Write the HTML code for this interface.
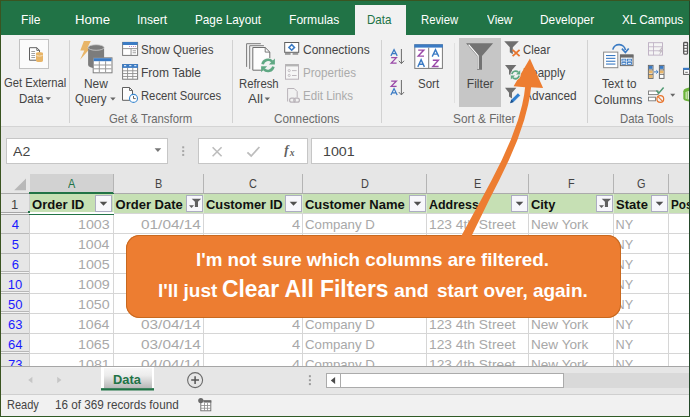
<!DOCTYPE html>
<html><head><meta charset="utf-8"><title>Excel - Clear All Filters</title>
<style>
html,body{margin:0;padding:0;}
body{width:690px;height:417px;overflow:hidden;position:relative;background:#e6e6e6;font-family:"Liberation Sans",sans-serif;}
.r{position:absolute;}
.t{position:absolute;white-space:nowrap;line-height:1;transform-origin:0 50%;font-family:"Liberation Sans",sans-serif;}
svg{position:absolute;left:0;top:0;}
</style></head><body>
<div class="r" style="left:0px;top:0px;width:690px;height:417px;background:#e6e6e6;"></div>
<div class="r" style="left:0px;top:0px;width:690px;height:35px;background:#217346;"></div>
<div class="r" style="left:0px;top:35px;width:690px;height:91px;background:#f1f1f1;"></div>
<div class="r" style="left:0px;top:126px;width:690px;height:1px;background:#d4d4d4;"></div>
<div class="r" style="left:355px;top:5px;width:51px;height:31px;background:#f1f1f1;"></div>
<span class="t" style="left:21.03px;top:14.02px;font-size:12.8px;color:#fff;transform:scaleX(0.9438);">File</span>
<span class="t" style="left:74.95px;top:14.02px;font-size:12.8px;color:#fff;transform:scaleX(1.0284);">Home</span>
<span class="t" style="left:136.91px;top:14.02px;font-size:12.8px;color:#fff;transform:scaleX(0.9420);">Insert</span>
<span class="t" style="left:195.06px;top:14.02px;font-size:12.8px;color:#fff;transform:scaleX(0.9183);">Page Layout</span>
<span class="t" style="left:289.03px;top:14.02px;font-size:12.8px;color:#fff;transform:scaleX(0.9441);">Formulas</span>
<span class="t" style="left:420.80px;top:14.02px;font-size:12.8px;color:#fff;transform:scaleX(0.8838);">Review</span>
<span class="t" style="left:486.84px;top:14.02px;font-size:12.8px;color:#fff;transform:scaleX(0.9215);">View</span>
<span class="t" style="left:540.05px;top:14.02px;font-size:12.8px;color:#fff;transform:scaleX(0.9274);">Developer</span>
<span class="t" style="left:622.21px;top:14.02px;font-size:12.8px;color:#fff;transform:scaleX(0.9214);">XL Campus</span>
<span class="t" style="left:367.27px;top:14.02px;font-size:12.8px;color:#217346;transform:scaleX(0.9044);">Data</span>
<div class="r" style="left:19px;top:39px;width:30px;height:30px;background:#fbfbfb;box-shadow:inset 0 0 0 1px #c2c2c2;"></div>
<span class="t" style="left:3.94px;top:77.02px;font-size:12.1px;color:#444;transform:scaleX(0.9267);">Get External</span>
<span class="t" style="left:18.57px;top:93.02px;font-size:12.1px;color:#444;transform:scaleX(0.9567);">Data</span>
<div class="r" style="left:69px;top:40px;width:1px;height:83px;background:#d2d2d2;"></div>
<span class="t" style="left:84.04px;top:78.02px;font-size:12.1px;color:#444;transform:scaleX(0.9874);">New</span>
<span class="t" style="left:75.48px;top:93.02px;font-size:12.1px;color:#444;transform:scaleX(0.9560);">Query</span>
<span class="t" style="left:140.98px;top:44.02px;font-size:12.1px;color:#444;transform:scaleX(0.9531);">Show Queries</span>
<span class="t" style="left:140.54px;top:67.02px;font-size:12.1px;color:#444;transform:scaleX(0.9948);">From Table</span>
<span class="t" style="left:140.80px;top:90.02px;font-size:12.1px;color:#444;transform:scaleX(0.9303);">Recent Sources</span>
<span class="t" style="left:108.93px;top:113.02px;font-size:12.1px;color:#6a6a6a;transform:scaleX(0.9380);">Get &amp; Transform</span>
<div class="r" style="left:232px;top:40px;width:1px;height:83px;background:#d2d2d2;"></div>
<span class="t" style="left:238.59px;top:78.02px;font-size:12.1px;color:#444;transform:scaleX(0.9361);">Refresh</span>
<span class="t" style="left:248.00px;top:93.02px;font-size:12.1px;color:#444;transform:scaleX(1.1072);">All</span>
<span class="t" style="left:303.20px;top:44.02px;font-size:12.1px;color:#444;transform:scaleX(0.9917);">Connections</span>
<span class="t" style="left:302.87px;top:67.02px;font-size:12.1px;color:#ababab;transform:scaleX(0.9612);">Properties</span>
<span class="t" style="left:302.77px;top:90.02px;font-size:12.1px;color:#ababab;transform:scaleX(0.9557);">Edit Links</span>
<span class="t" style="left:273.91px;top:113.02px;font-size:12.1px;color:#6a6a6a;transform:scaleX(0.9736);">Connections</span>
<div class="r" style="left:381px;top:40px;width:1px;height:83px;background:#d2d2d2;"></div>
<span class="t" style="left:417.98px;top:78.02px;font-size:12.1px;color:#444;transform:scaleX(0.9518);">Sort</span>
<div class="r" style="left:454px;top:43px;width:1px;height:60px;background:#e0e0e0;"></div>
<div class="r" style="left:459px;top:38px;width:42px;height:69px;background:#c6c6c6;"></div>
<span class="t" style="left:466.78px;top:78.02px;font-size:12.1px;color:#444;">Filter</span>
<span class="t" style="left:522.93px;top:44.02px;font-size:12.1px;color:#444;transform:scaleX(0.9420);">Clear</span>
<span class="t" style="left:522.58px;top:67.02px;font-size:12.1px;color:#444;transform:scaleX(0.9508);">Reapply</span>
<span class="t" style="left:523.50px;top:90.02px;font-size:12.1px;color:#444;transform:scaleX(0.9782);">Advanced</span>
<span class="t" style="left:452.97px;top:113.02px;font-size:12.1px;color:#6a6a6a;transform:scaleX(0.9776);">Sort &amp; Filter</span>
<div class="r" style="left:587px;top:40px;width:1px;height:83px;background:#d2d2d2;"></div>
<span class="t" style="left:601.52px;top:78.02px;font-size:12.1px;color:#444;transform:scaleX(0.9668);">Text to</span>
<span class="t" style="left:594.39px;top:94.02px;font-size:12.1px;color:#444;transform:scaleX(1.0116);">Columns</span>
<span class="t" style="left:620.09px;top:113.02px;font-size:12.1px;color:#6a6a6a;transform:scaleX(0.9363);">Data Tools</span>
<div class="r" style="left:6px;top:138px;width:162px;height:26px;background:#fff;box-shadow:inset 0 0 0 1px #c6c6c6;"></div>
<span class="t" style="left:13.00px;top:145.02px;font-size:13px;color:#444;transform:scaleX(1.0848);">A2</span>
<div class="r" style="left:198px;top:138px;width:110px;height:26px;background:#fff;box-shadow:inset 0 0 0 1px #c6c6c6;"></div>
<div class="r" style="left:311px;top:138px;width:379px;height:26px;background:#fff;box-shadow:inset 0 0 0 1px #c6c6c6;"></div>
<span class="t" style="left:322.93px;top:145.02px;font-size:13px;color:#444;transform:scaleX(1.0963);">1001</span>
<span class="t" style="left:284.20px;top:143.02px;font-size:13px;color:#606060;font-weight:bold;font-style:italic;font-family:'Liberation Serif',serif;">f</span>
<span class="t" style="left:289.74px;top:149.02px;font-size:9.5px;color:#606060;font-weight:bold;font-style:italic;font-family:'Liberation Serif',serif;">x</span>
<div class="r" style="left:0px;top:174px;width:690px;height:20px;background:#e6e6e6;"></div>
<div class="r" style="left:29px;top:194px;width:661px;height:172px;background:#fff;"></div>
<div class="r" style="left:30px;top:174px;width:83px;height:20px;background:#d2d2d2;"></div>
<div class="r" style="left:0px;top:193px;width:690px;height:1px;background:#ababab;"></div>
<div class="r" style="left:29px;top:192px;width:85px;height:2px;background:#217346;"></div>
<span class="t" style="left:67.62px;top:177.02px;font-size:13px;color:#217346;transform:scaleX(0.8400);">A</span>
<span class="t" style="left:154.58px;top:177.02px;font-size:13px;color:#444;transform:scaleX(0.8400);">B</span>
<span class="t" style="left:249.24px;top:177.02px;font-size:13px;color:#444;transform:scaleX(0.8400);">C</span>
<span class="t" style="left:360.50px;top:177.02px;font-size:13px;color:#444;transform:scaleX(0.8400);">D</span>
<span class="t" style="left:473.65px;top:177.02px;font-size:13px;color:#444;transform:scaleX(0.8400);">E</span>
<span class="t" style="left:567.58px;top:177.02px;font-size:13px;color:#444;transform:scaleX(0.8400);">F</span>
<span class="t" style="left:637.13px;top:177.02px;font-size:13px;color:#444;transform:scaleX(0.8400);">G</span>
<div class="r" style="left:113px;top:174px;width:1px;height:19px;background:#b4b4b4;"></div>
<div class="r" style="left:203px;top:174px;width:1px;height:19px;background:#b4b4b4;"></div>
<div class="r" style="left:302px;top:174px;width:1px;height:19px;background:#b4b4b4;"></div>
<div class="r" style="left:426px;top:174px;width:1px;height:19px;background:#b4b4b4;"></div>
<div class="r" style="left:528px;top:174px;width:1px;height:19px;background:#b4b4b4;"></div>
<div class="r" style="left:613px;top:174px;width:1px;height:19px;background:#b4b4b4;"></div>
<div class="r" style="left:668px;top:174px;width:1px;height:19px;background:#b4b4b4;"></div>
<div class="r" style="left:29px;top:194px;width:661px;height:19px;background:#c6e0b4;"></div>
<div class="r" style="left:29px;top:213px;width:661px;height:1px;background:#d6d6d6;"></div>
<div class="r" style="left:29px;top:233px;width:661px;height:1px;background:#d6d6d6;"></div>
<div class="r" style="left:29px;top:253px;width:661px;height:1px;background:#d6d6d6;"></div>
<div class="r" style="left:29px;top:273px;width:661px;height:1px;background:#d6d6d6;"></div>
<div class="r" style="left:29px;top:293px;width:661px;height:1px;background:#d6d6d6;"></div>
<div class="r" style="left:29px;top:313px;width:661px;height:1px;background:#d6d6d6;"></div>
<div class="r" style="left:29px;top:333px;width:661px;height:1px;background:#d6d6d6;"></div>
<div class="r" style="left:29px;top:353px;width:661px;height:1px;background:#d6d6d6;"></div>
<div class="r" style="left:113px;top:213px;width:1px;height:153px;background:#d6d6d6;"></div>
<div class="r" style="left:113px;top:194px;width:1px;height:19px;background:#dbe9d0;"></div>
<div class="r" style="left:203px;top:213px;width:1px;height:153px;background:#d6d6d6;"></div>
<div class="r" style="left:203px;top:194px;width:1px;height:19px;background:#dbe9d0;"></div>
<div class="r" style="left:302px;top:213px;width:1px;height:153px;background:#d6d6d6;"></div>
<div class="r" style="left:302px;top:194px;width:1px;height:19px;background:#dbe9d0;"></div>
<div class="r" style="left:426px;top:213px;width:1px;height:153px;background:#d6d6d6;"></div>
<div class="r" style="left:426px;top:194px;width:1px;height:19px;background:#dbe9d0;"></div>
<div class="r" style="left:528px;top:213px;width:1px;height:153px;background:#d6d6d6;"></div>
<div class="r" style="left:528px;top:194px;width:1px;height:19px;background:#dbe9d0;"></div>
<div class="r" style="left:613px;top:213px;width:1px;height:153px;background:#d6d6d6;"></div>
<div class="r" style="left:613px;top:194px;width:1px;height:19px;background:#dbe9d0;"></div>
<div class="r" style="left:668px;top:213px;width:1px;height:153px;background:#d6d6d6;"></div>
<div class="r" style="left:668px;top:194px;width:1px;height:19px;background:#dbe9d0;"></div>
<div class="r" style="left:0px;top:194px;width:29px;height:172px;background:#e6e6e6;"></div>
<div class="r" style="left:29px;top:194px;width:1px;height:172px;background:#cfcfcf;"></div>
<span class="t" style="left:10.93px;top:198.02px;font-size:13px;color:#444;">1</span>
<div class="r" style="left:0px;top:213px;width:29px;height:1px;background:#b8b8b8;"></div>
<span class="t" style="left:11.72px;top:218.02px;font-size:13px;color:#1a1aff;">4</span>
<div class="r" style="left:0px;top:233px;width:29px;height:1px;background:#b8b8b8;"></div>
<span class="t" style="left:11.69px;top:238.02px;font-size:13px;color:#1a1aff;">5</span>
<div class="r" style="left:0px;top:253px;width:29px;height:1px;background:#b8b8b8;"></div>
<span class="t" style="left:11.63px;top:258.02px;font-size:13px;color:#1a1aff;">6</span>
<div class="r" style="left:0px;top:273px;width:29px;height:1px;background:#b8b8b8;"></div>
<div class="r" style="left:0px;top:271px;width:29px;height:1px;background:#b8b8b8;"></div>
<div class="r" style="left:0px;top:272px;width:29px;height:1px;background:#f4f4f4;"></div>
<span class="t" style="left:7.83px;top:278.02px;font-size:13px;color:#1a1aff;">10</span>
<div class="r" style="left:0px;top:293px;width:29px;height:1px;background:#b8b8b8;"></div>
<div class="r" style="left:0px;top:291px;width:29px;height:1px;background:#b8b8b8;"></div>
<div class="r" style="left:0px;top:292px;width:29px;height:1px;background:#f4f4f4;"></div>
<span class="t" style="left:8.05px;top:298.02px;font-size:13px;color:#1a1aff;">50</span>
<div class="r" style="left:0px;top:313px;width:29px;height:1px;background:#b8b8b8;"></div>
<div class="r" style="left:0px;top:311px;width:29px;height:1px;background:#b8b8b8;"></div>
<div class="r" style="left:0px;top:312px;width:29px;height:1px;background:#f4f4f4;"></div>
<span class="t" style="left:8.02px;top:318.02px;font-size:13px;color:#1a1aff;">63</span>
<div class="r" style="left:0px;top:333px;width:29px;height:1px;background:#b8b8b8;"></div>
<span class="t" style="left:7.92px;top:338.02px;font-size:13px;color:#1a1aff;">64</span>
<div class="r" style="left:0px;top:353px;width:29px;height:1px;background:#b8b8b8;"></div>
<div class="r" style="left:0px;top:351px;width:29px;height:1px;background:#b8b8b8;"></div>
<div class="r" style="left:0px;top:352px;width:29px;height:1px;background:#f4f4f4;"></div>
<span class="t" style="left:8.02px;top:358.02px;font-size:13px;color:#1a1aff;">73</span>
<div class="r" style="left:0px;top:212px;width:29px;height:1px;background:#a6a6a6;"></div>
<div class="r" style="left:0px;top:213px;width:29px;height:1px;background:#f4f4f4;"></div>
<div class="r" style="left:0px;top:214px;width:29px;height:1px;background:#a6a6a6;"></div>
<div class="r" style="left:29px;top:212px;width:85px;height:1.5px;background:#fff;"></div>
<div class="r" style="left:29px;top:213.5px;width:85px;height:1.5px;background:#217346;"></div>
<div class="r" style="left:28px;top:211px;width:2px;height:2px;background:#217346;"></div>
<span class="t" style="left:31.98px;top:198.02px;font-size:13px;color:#111;font-weight:bold;transform:scaleX(1.0057);">Order ID</span>
<span class="t" style="left:115.58px;top:198.02px;font-size:13px;color:#111;font-weight:bold;">Order Date</span>
<span class="t" style="left:205.99px;top:198.02px;font-size:13px;color:#111;font-weight:bold;transform:scaleX(0.9902);">Customer ID</span>
<span class="t" style="left:304.98px;top:198.02px;font-size:13px;color:#111;font-weight:bold;">Customer Name</span>
<span class="t" style="left:429.19px;top:198.02px;font-size:13px;color:#111;font-weight:bold;transform:scaleX(0.9579);">Address</span>
<span class="t" style="left:531.24px;top:198.02px;font-size:13px;color:#111;font-weight:bold;transform:scaleX(0.9902);">City</span>
<span class="t" style="left:616.11px;top:198.02px;font-size:13px;color:#111;font-weight:bold;">State</span>
<span class="t" style="left:670.54px;top:198.02px;font-size:13px;color:#111;font-weight:bold;transform:scaleX(0.8982);">Pos</span>
<div class="r" style="left:95px;top:195px;width:17px;height:17px;background:#f7f7fb;box-shadow:inset 0 0 0 1px #adadc2;"></div>
<div class="r" style="left:186px;top:195px;width:17px;height:17px;background:#f7f7fb;box-shadow:inset 0 0 0 1px #adadc2;"></div>
<div class="r" style="left:285px;top:195px;width:17px;height:17px;background:#f7f7fb;box-shadow:inset 0 0 0 1px #adadc2;"></div>
<div class="r" style="left:409px;top:195px;width:17px;height:17px;background:#f7f7fb;box-shadow:inset 0 0 0 1px #adadc2;"></div>
<div class="r" style="left:511px;top:195px;width:17px;height:17px;background:#f7f7fb;box-shadow:inset 0 0 0 1px #adadc2;"></div>
<div class="r" style="left:596px;top:195px;width:17px;height:17px;background:#f7f7fb;box-shadow:inset 0 0 0 1px #adadc2;"></div>
<div class="r" style="left:651px;top:195px;width:17px;height:17px;background:#f7f7fb;box-shadow:inset 0 0 0 1px #adadc2;"></div>
<span class="t" style="left:78.03px;top:219.02px;font-size:12.7px;color:#a8a8a8;transform:scaleX(1.1233);">1003</span>
<span class="t" style="left:140.78px;top:219.02px;font-size:12.7px;color:#a8a8a8;transform:scaleX(1.2125);">01/04/14</span>
<span class="t" style="left:292.46px;top:219.02px;font-size:12.7px;color:#a8a8a8;transform:scaleX(1.1579);">4</span>
<span class="t" style="left:304.84px;top:219.02px;font-size:12.7px;color:#a8a8a8;transform:scaleX(1.0418);">Company D</span>
<span class="t" style="left:429.06px;top:219.02px;font-size:12.7px;color:#a8a8a8;transform:scaleX(1.0871);">123 4th Street</span>
<span class="t" style="left:530.66px;top:219.02px;font-size:12.7px;color:#a8a8a8;transform:scaleX(1.0704);">New York</span>
<span class="t" style="left:615.49px;top:219.02px;font-size:12.7px;color:#a8a8a8;">NY</span>
<span class="t" style="left:78.04px;top:239.02px;font-size:12.7px;color:#a8a8a8;transform:scaleX(1.1153);">1004</span>
<span class="t" style="left:140.78px;top:239.02px;font-size:12.7px;color:#a8a8a8;transform:scaleX(1.2125);">01/04/14</span>
<span class="t" style="left:292.46px;top:239.02px;font-size:12.7px;color:#a8a8a8;transform:scaleX(1.1579);">4</span>
<span class="t" style="left:304.84px;top:239.02px;font-size:12.7px;color:#a8a8a8;transform:scaleX(1.0418);">Company D</span>
<span class="t" style="left:429.06px;top:239.02px;font-size:12.7px;color:#a8a8a8;transform:scaleX(1.0871);">123 4th Street</span>
<span class="t" style="left:530.66px;top:239.02px;font-size:12.7px;color:#a8a8a8;transform:scaleX(1.0704);">New York</span>
<span class="t" style="left:615.49px;top:239.02px;font-size:12.7px;color:#a8a8a8;">NY</span>
<span class="t" style="left:78.03px;top:259.02px;font-size:12.7px;color:#a8a8a8;transform:scaleX(1.1233);">1005</span>
<span class="t" style="left:140.78px;top:259.02px;font-size:12.7px;color:#a8a8a8;transform:scaleX(1.2125);">01/04/14</span>
<span class="t" style="left:292.46px;top:259.02px;font-size:12.7px;color:#a8a8a8;transform:scaleX(1.1579);">4</span>
<span class="t" style="left:304.84px;top:259.02px;font-size:12.7px;color:#a8a8a8;transform:scaleX(1.0418);">Company D</span>
<span class="t" style="left:429.06px;top:259.02px;font-size:12.7px;color:#a8a8a8;transform:scaleX(1.0871);">123 4th Street</span>
<span class="t" style="left:530.66px;top:259.02px;font-size:12.7px;color:#a8a8a8;transform:scaleX(1.0704);">New York</span>
<span class="t" style="left:615.49px;top:259.02px;font-size:12.7px;color:#a8a8a8;">NY</span>
<span class="t" style="left:78.03px;top:279.02px;font-size:12.7px;color:#a8a8a8;transform:scaleX(1.1259);">1009</span>
<span class="t" style="left:140.78px;top:279.02px;font-size:12.7px;color:#a8a8a8;transform:scaleX(1.2125);">01/04/14</span>
<span class="t" style="left:292.46px;top:279.02px;font-size:12.7px;color:#a8a8a8;transform:scaleX(1.1579);">4</span>
<span class="t" style="left:304.84px;top:279.02px;font-size:12.7px;color:#a8a8a8;transform:scaleX(1.0418);">Company D</span>
<span class="t" style="left:429.06px;top:279.02px;font-size:12.7px;color:#a8a8a8;transform:scaleX(1.0871);">123 4th Street</span>
<span class="t" style="left:530.66px;top:279.02px;font-size:12.7px;color:#a8a8a8;transform:scaleX(1.0704);">New York</span>
<span class="t" style="left:615.49px;top:279.02px;font-size:12.7px;color:#a8a8a8;">NY</span>
<span class="t" style="left:78.03px;top:299.02px;font-size:12.7px;color:#a8a8a8;transform:scaleX(1.1206);">1050</span>
<span class="t" style="left:140.78px;top:299.02px;font-size:12.7px;color:#a8a8a8;transform:scaleX(1.2125);">01/04/14</span>
<span class="t" style="left:292.46px;top:299.02px;font-size:12.7px;color:#a8a8a8;transform:scaleX(1.1579);">4</span>
<span class="t" style="left:304.84px;top:299.02px;font-size:12.7px;color:#a8a8a8;transform:scaleX(1.0418);">Company D</span>
<span class="t" style="left:429.06px;top:299.02px;font-size:12.7px;color:#a8a8a8;transform:scaleX(1.0871);">123 4th Street</span>
<span class="t" style="left:530.66px;top:299.02px;font-size:12.7px;color:#a8a8a8;transform:scaleX(1.0704);">New York</span>
<span class="t" style="left:615.49px;top:299.02px;font-size:12.7px;color:#a8a8a8;">NY</span>
<span class="t" style="left:78.04px;top:319.02px;font-size:12.7px;color:#a8a8a8;transform:scaleX(1.1153);">1064</span>
<span class="t" style="left:140.78px;top:319.02px;font-size:12.7px;color:#a8a8a8;transform:scaleX(1.2125);">03/04/14</span>
<span class="t" style="left:292.46px;top:319.02px;font-size:12.7px;color:#a8a8a8;transform:scaleX(1.1579);">4</span>
<span class="t" style="left:304.84px;top:319.02px;font-size:12.7px;color:#a8a8a8;transform:scaleX(1.0418);">Company D</span>
<span class="t" style="left:429.06px;top:319.02px;font-size:12.7px;color:#a8a8a8;transform:scaleX(1.0871);">123 4th Street</span>
<span class="t" style="left:530.66px;top:319.02px;font-size:12.7px;color:#a8a8a8;transform:scaleX(1.0704);">New York</span>
<span class="t" style="left:615.49px;top:319.02px;font-size:12.7px;color:#a8a8a8;">NY</span>
<span class="t" style="left:78.03px;top:339.02px;font-size:12.7px;color:#a8a8a8;transform:scaleX(1.1233);">1065</span>
<span class="t" style="left:140.78px;top:339.02px;font-size:12.7px;color:#a8a8a8;transform:scaleX(1.2125);">03/04/14</span>
<span class="t" style="left:292.46px;top:339.02px;font-size:12.7px;color:#a8a8a8;transform:scaleX(1.1579);">4</span>
<span class="t" style="left:304.84px;top:339.02px;font-size:12.7px;color:#a8a8a8;transform:scaleX(1.0418);">Company D</span>
<span class="t" style="left:429.06px;top:339.02px;font-size:12.7px;color:#a8a8a8;transform:scaleX(1.0871);">123 4th Street</span>
<span class="t" style="left:530.66px;top:339.02px;font-size:12.7px;color:#a8a8a8;transform:scaleX(1.0704);">New York</span>
<span class="t" style="left:615.49px;top:339.02px;font-size:12.7px;color:#a8a8a8;">NY</span>
<span class="t" style="left:78.03px;top:359.02px;font-size:12.7px;color:#a8a8a8;transform:scaleX(1.1259);">1081</span>
<span class="t" style="left:140.78px;top:359.02px;font-size:12.7px;color:#a8a8a8;transform:scaleX(1.2125);">04/04/14</span>
<span class="t" style="left:292.46px;top:359.02px;font-size:12.7px;color:#a8a8a8;transform:scaleX(1.1579);">4</span>
<span class="t" style="left:304.84px;top:359.02px;font-size:12.7px;color:#a8a8a8;transform:scaleX(1.0418);">Company D</span>
<span class="t" style="left:429.06px;top:359.02px;font-size:12.7px;color:#a8a8a8;transform:scaleX(1.0871);">123 4th Street</span>
<span class="t" style="left:530.66px;top:359.02px;font-size:12.7px;color:#a8a8a8;transform:scaleX(1.0704);">New York</span>
<span class="t" style="left:615.49px;top:359.02px;font-size:12.7px;color:#a8a8a8;">NY</span>
<div class="r" style="left:0px;top:366px;width:690px;height:28px;background:#e6e6e6;"></div>
<div class="r" style="left:0px;top:366px;width:690px;height:1px;background:#a6a6a6;"></div>
<div class="r" style="left:0px;top:394px;width:690px;height:23px;background:#f1f1f1;"></div>
<div class="r" style="left:0px;top:394px;width:690px;height:1px;background:#cfcfcf;"></div>
<div class="r" style="left:101px;top:367px;width:53px;height:22px;background:#fff;"></div>
<div class="r" style="left:104px;top:368px;width:47.5px;height:20.5px;background:#ddd;background:linear-gradient(#f6f6f6 0%,#ececec 35%,#b4b4b4 100%);"></div>
<div class="r" style="left:101px;top:388px;width:53px;height:1px;background:#3f8360;"></div>
<div class="r" style="left:101px;top:389px;width:53px;height:1px;background:#217346;"></div>
<div class="r" style="left:101px;top:390px;width:53px;height:1px;background:#84ad96;"></div>
<span class="t" style="left:113.27px;top:374.02px;font-size:12.9px;color:#217346;font-weight:bold;transform:scaleX(0.9956);">Data</span>
<div class="r" style="left:326px;top:373px;width:15px;height:14.5px;background:#fff;box-shadow:inset 0 0 0 1px #ababab;"></div>
<div class="r" style="left:341px;top:373px;width:349px;height:14.5px;background:#d9d9d9;"></div>
<div class="r" style="left:340px;top:373px;width:224px;height:14.5px;background:#fff;box-shadow:inset 0 0 0 1px #ababab;"></div>
<span class="t" style="left:7.37px;top:399.02px;font-size:12.1px;color:#444;transform:scaleX(0.9117);">Ready</span>
<span class="t" style="left:54.62px;top:399.02px;font-size:12.1px;color:#444;transform:scaleX(0.9680);">16 of 369 records found</span>
<div class="r" style="left:126px;top:235px;width:494.5px;height:83px;background:#ed7d31;border-radius:13.5px;box-shadow:inset 0 0 0 1px #c8691f;"></div>
<span class="t" style="left:195.98px;top:251.02px;font-size:18.2px;color:#fff;font-weight:bold;transform:scaleX(1.0321);">I'm not sure which columns are filtered.</span>
<span class="t" style="left:158.37px;top:282.02px;font-size:18.2px;color:#fff;font-weight:bold;transform:scaleX(1.0431);">I'll just</span>
<span class="t" style="left:221.99px;top:278.02px;font-size:23.4px;color:#fff;font-weight:bold;transform:scaleX(0.9754);">Clear All Filters</span>
<span class="t" style="left:393.91px;top:282.02px;font-size:18.2px;color:#fff;font-weight:bold;transform:scaleX(1.0727);">and</span>
<span class="t" style="left:437.14px;top:282.02px;font-size:18.2px;color:#fff;font-weight:bold;transform:scaleX(1.0429);">start over, again.</span>
<div class="r" style="left:0px;top:0px;width:1.2px;height:417px;background:#3a5421;"></div>
<div class="r" style="left:688.8px;top:0px;width:1.2px;height:417px;background:#23482a;"></div>
<div class="r" style="left:0px;top:415.6px;width:690px;height:1.4px;background:#2f5a26;"></div>
<div class="r" style="left:0px;top:0px;width:690px;height:1px;background:#3a5421;"></div>
<svg width="690" height="417" viewBox="0 0 690 417">
<path d="M99.7,201.8h7.6l-3.8,4z" fill="#505050"/>
<path d="M191.7,198.8h9.5l-3.2,3v5.2h-3.1v-5.2z" fill="#606060"/>
<path d="M189,205.2h5l-2.5,2.9z" fill="#606060"/>
<path d="M289.7,201.8h7.6l-3.8,4z" fill="#505050"/>
<path d="M413.7,201.8h7.6l-3.8,4z" fill="#505050"/>
<path d="M515.7,201.8h7.6l-3.8,4z" fill="#505050"/>
<path d="M601.7,198.8h9.5l-3.2,3v5.2h-3.1v-5.2z" fill="#606060"/>
<path d="M599,205.2h5l-2.5,2.9z" fill="#606060"/>
<path d="M655.7,201.8h7.6l-3.8,4z" fill="#505050"/>
<path d="M529.9,58.6 L543.1,88 L531.1,87.3 L530.1,95 L528.1,105 L524.2,120 L517.4,140 L508.9,160 L499.3,180 L489.1,200 L481.8,215 L475.4,228 L471.1,237 L460.8,237 L465.6,228 L472.7,215 L481.0,200 L491.7,180 L501.8,160 L510.7,140 L518.0,120 L522.1,105 L524.1,95 L525.1,87.3 L513.6,86.2 Z" fill="#ed7d31"/>
<path d="M29.5,47.7h7.3l2.7,2.7v9.8h-10z" fill="#fff" stroke="#5f5f5f" stroke-width="1"/>
<path d="M36.8,47.7v2.7h2.7" fill="none" stroke="#5f5f5f" stroke-width="0.9"/>
<rect x="31.3" y="51.0" width="3.8" height="0.8" fill="#8a8a8a"/>
<rect x="31.3" y="53.1" width="3.8" height="0.8" fill="#8a8a8a"/>
<rect x="31.3" y="55.1" width="3.8" height="0.8" fill="#8a8a8a"/>
<rect x="31.3" y="57.2" width="3.8" height="0.8" fill="#8a8a8a"/>
<path d="M36,53.6 v6.8 a3.5,1.5 0 0 0 7,0 v-6.8 z" fill="#e8b568"/>
<ellipse cx="39.5" cy="53.6" rx="3.5" ry="1.5" fill="#e8b568"/>
<path d="M36.3,54.9 a3.2,1.2 0 0 0 6.4,0" fill="none" stroke="#fbeed8" stroke-width="0.8"/>
<path d="M45.5,97.2h5.4l-2.7,3z" fill="#666"/>
<path d="M83.9,41 L90.8,41.1 L87.6,47.4 L90.4,48 L80.1,59.8 L84.3,50.4 L80.3,50.4 Z" fill="#e8b568"/>
<path d="M88.1,47.5 v17.5 a8,3.2 0 0 0 16,0 v-17.5 z" fill="#7c7c7c"/>
<ellipse cx="96.1" cy="47.5" rx="8" ry="2.8" fill="#7c7c7c" stroke="#cfcfcf" stroke-width="0.8"/>
<rect x="93.2" y="57.8" width="18.8" height="15" fill="#fff" stroke="#7f7f7f" stroke-width="1"/>
<rect x="93.7" y="58.2" width="17.8" height="3" fill="#3b7bc4"/>
<rect x="98.8" y="61.2" width="1" height="11.2" fill="#9a9a9a"/>
<rect x="105.1" y="61.2" width="1" height="11.2" fill="#9a9a9a"/>
<rect x="93.7" y="64.5" width="17.8" height="1" fill="#9a9a9a"/>
<rect x="93.7" y="68.3" width="17.8" height="1" fill="#9a9a9a"/>
<path d="M110.2,97.6h5.4l-2.7,3z" fill="#666"/>
<rect x="122.6" y="42.4" width="15" height="13" fill="#fff" stroke="#7a7a7a" stroke-width="1"/>
<rect x="122.6" y="42" width="15" height="3" fill="#3b7bc4"/>
<rect x="123" y="48.2" width="14.2" height="0.9" fill="#8a8a8a"/>
<rect x="130.6" y="48.6" width="0.9" height="6.5" fill="#8a8a8a"/>
<rect x="132.6" y="50.4" width="3.4" height="0.8" fill="#8a8a8a"/><rect x="132.6" y="52.4" width="3.4" height="0.8" fill="#8a8a8a"/>
<rect x="129.2" y="46.2" width="0.8" height="0.8" fill="#9a4aa8"/>
<rect x="131.1" y="46.2" width="0.8" height="0.8" fill="#9a4aa8"/>
<rect x="133" y="46.2" width="0.8" height="0.8" fill="#9a4aa8"/>
<rect x="134.9" y="46.2" width="0.8" height="0.8" fill="#9a4aa8"/>
<rect x="122.6" y="64.6" width="15" height="14.6" fill="#fff" stroke="#7a7a7a" stroke-width="1"/>
<rect x="122.2" y="64.1" width="15.8" height="3.8" fill="#3b7bc4"/>
<rect x="124" y="65.2" width="2.2" height="1" fill="#fff"/>
<rect x="129.2" y="65.2" width="2.2" height="1" fill="#fff"/>
<rect x="134.2" y="65.2" width="2.2" height="1" fill="#fff"/>
<rect x="127.14999999999999" y="67.9" width="0.9" height="11" fill="#8f8f8f"/>
<rect x="132.35000000000002" y="67.9" width="0.9" height="11" fill="#8f8f8f"/>
<rect x="123" y="70.35" width="14.4" height="0.9" fill="#8f8f8f"/>
<rect x="123" y="73.14999999999999" width="14.4" height="0.9" fill="#8f8f8f"/>
<rect x="123" y="75.95" width="14.4" height="0.9" fill="#8f8f8f"/>
<path d="M122.5,87.5h7l3,3v9.8h-10z" fill="#fcfcfc" stroke="#5f5f5f" stroke-width="1"/>
<path d="M129.5,87.5v3h3" fill="none" stroke="#5f5f5f" stroke-width="0.9"/>
<circle cx="133.5" cy="98.4" r="4" fill="#fff" stroke="#3a87cf" stroke-width="1.1"/>
<path d="M133.5,96v2.6h2.2" fill="none" stroke="#555" stroke-width="0.9"/>
<path d="M246.6,66.9v-23.2h14.2" fill="none" stroke="#7a7a7a" stroke-width="1"/>
<path d="M249.7,68.9v-23.2h14.2" fill="none" stroke="#7a7a7a" stroke-width="1"/>
<path d="M252.8,47.5h12.4l4.6,4.6v18.1h-17z" fill="#fdfdfd" stroke="#6f6f6f" stroke-width="1"/>
<path d="M265.2,47.5v4.6h4.6" fill="none" stroke="#6f6f6f" stroke-width="0.9"/>
<circle cx="268" cy="65.4" r="7.6" fill="#f1f1f1"/>
<path d="M262.6,64.2 a5.6,5.6 0 0 1 9.6,-2.6" fill="none" stroke="#5fa883" stroke-width="2.6"/>
<path d="M274.9,58.6 l0,6 l-6,0 z" fill="#5fa883"/>
<path d="M273.4,66.6 a5.6,5.6 0 0 1 -9.6,2.6" fill="none" stroke="#5fa883" stroke-width="2.6"/>
<path d="M261.1,72.2 l0,-6 l6,0 z" fill="#5fa883"/>
<path d="M264.6,97.6h5.4l-2.7,3z" fill="#666"/>
<rect x="284.7" y="42.5" width="14" height="9.8" fill="#fff" stroke="#5f5f5f" stroke-width="1"/>
<rect x="285" y="53.4" width="5.6" height="1.1" fill="#5f5f5f"/><rect x="292.6" y="53.4" width="5.6" height="1.1" fill="#5f5f5f"/>
<path d="M291.7,44.6 l2.8,2.8 l-2.8,2.8 l-2.8,-2.8z" fill="#fff" stroke="#3b7bc4" stroke-width="1.5"/>
<rect x="285.5" y="64.6" width="13" height="14.6" fill="#f6f6f6" stroke="#b9b3b9" stroke-width="1"/>
<rect x="285.5" y="64.2" width="13" height="2.2" fill="#b5b5b5"/>
<circle cx="289.2" cy="70.6" r="1.1" fill="none" stroke="#b9b3b9" stroke-width="0.8"/>
<rect x="292" y="70.19999999999999" width="4.6" height="0.9" fill="#b9b3b9"/>
<circle cx="289.2" cy="75.4" r="1.1" fill="none" stroke="#b9b3b9" stroke-width="0.8"/>
<rect x="292" y="75.0" width="4.6" height="0.9" fill="#b9b3b9"/>
<path d="M287.6,101.5v-13h6.6l3,3v6" fill="none" stroke="#b9b3b9" stroke-width="1"/>
<rect x="289.6" y="98.2" width="5.6" height="4" rx="2" fill="#f1f1f1" stroke="#b9b3b9" stroke-width="1.2"/>
<rect x="293.8" y="98.2" width="5.6" height="4" rx="2" fill="none" stroke="#b9b3b9" stroke-width="1.2"/>
<path d="M390.9,55.9 L394.04999999999995,49.6 L397.2,55.9 M392.15999999999997,53.632000000000005 H395.94" fill="none" stroke="#3b7bc4" stroke-width="1.25" stroke-linejoin="miter"/>
<path d="M391.2,57.7 H396.40000000000003 L391.2,63.1 H396.6" fill="none" stroke="#9a4aa8" stroke-width="1.25"/>
<path d="M401.4,49V63.4 M398.79999999999995,60.8 L401.4,63.6 L404.0,60.8" fill="none" stroke="#6a6a6a" stroke-width="1"/>
<path d="M391.2,81.0 H396.40000000000003 L391.2,86.3 H396.6" fill="none" stroke="#9a4aa8" stroke-width="1.25"/>
<path d="M390.9,95.1 L394.04999999999995,88.6 L397.2,95.1 M392.15999999999997,92.75999999999999 H395.94" fill="none" stroke="#3b7bc4" stroke-width="1.25" stroke-linejoin="miter"/>
<path d="M401.4,80V94.7 M398.79999999999995,92.1 L401.4,94.89999999999999 L404.0,92.1" fill="none" stroke="#6a6a6a" stroke-width="1"/>
<rect x="414.8" y="44.8" width="27.6" height="23.6" fill="#fff" stroke="#7a7a7a" stroke-width="1"/>
<rect x="414.3" y="44.3" width="28.6" height="3.3" fill="#3b7bc4"/>
<rect x="428.2" y="47.6" width="1" height="20.8" fill="#7a7a7a"/>
<path d="M418.2,50.1 H423.8 L418.2,56.1 H424" fill="none" stroke="#9a4aa8" stroke-width="1.4"/>
<path d="M417.8,66.9 L421.1,59.7 L424.40000000000003,66.9 M419.12,64.308 H423.08" fill="none" stroke="#3b7bc4" stroke-width="1.4" stroke-linejoin="miter"/>
<path d="M432.2,56.6 L435.5,49.6 L438.8,56.6 M433.52,54.08 H437.47999999999996" fill="none" stroke="#3b7bc4" stroke-width="1.4" stroke-linejoin="miter"/>
<path d="M432.8,60.3 H438.40000000000003 L432.8,66.5 H438.6" fill="none" stroke="#9a4aa8" stroke-width="1.4"/>
<path d="M466.1,43.2 H493.1 L482,56 V69.7 H477.1 V56 Z" fill="#737373"/>
<path d="M468.6,44.6 L478.1,55.6 V69" fill="none" stroke="#fff" stroke-width="1.2"/>
<path d="M504.2,41.3 h14.6 l-6.0,5.8500000000000005 v7.15 l-3,-2 v-5.15 z" fill="#6f6f6f"/>
<path d="M512.6,49.8 l7,6.4 M519.6,49.8 l-7,6.4" stroke="#e8742c" stroke-width="1.8" fill="none"/>
<path d="M505,64.9 h11.4 l-4.4,5.13 v6.2700000000000005 l-3,-2 v-4.2700000000000005 z" fill="#6f6f6f"/>
<circle cx="515.5" cy="74.8" r="5.2" fill="#f1f1f1"/>
<path d="M511.9,74.2 a3.7,3.7 0 0 1 6.3,-2" fill="none" stroke="#5fa883" stroke-width="1.8"/>
<path d="M520.2,70.2 v4.2 h-4.2 z" fill="#5fa883"/>
<path d="M519.1,75.6 a3.7,3.7 0 0 1 -6.3,2" fill="none" stroke="#5fa883" stroke-width="1.8"/>
<path d="M510.8,79.6 v-4.2 h4.2 z" fill="#5fa883"/>
<path d="M505,87.8 h11.4 l-4.4,4.86 v5.940000000000001 l-3,-2 v-3.9400000000000013 z" fill="#6f6f6f"/>
<path d="M517.9,93 l2.4,2.4 l-6.6,6.6 l-3.6,1.2 l1.2,-3.6 z" fill="#2f7fd0" stroke="#f1f1f1" stroke-width="0.5"/>
<path d="M510.1,103.2 l1.2,-3.6 l2.4,2.4 z" fill="#1c4f8a"/>
<rect x="603.6" y="52.1" width="14.2" height="15.6" fill="#fff" stroke="#8a8a8a" stroke-width="1"/>
<rect x="606" y="55.0" width="9.4" height="1.1" fill="#3b7bc4"/>
<rect x="606" y="57.8" width="9.4" height="1.1" fill="#3b7bc4"/>
<rect x="606" y="60.7" width="9.4" height="1.1" fill="#3b7bc4"/>
<rect x="606" y="63.5" width="9.4" height="1.1" fill="#3b7bc4"/>
<rect x="620.4" y="55" width="12.6" height="10.6" fill="#fff" stroke="#6a6a6a" stroke-width="1"/>
<rect x="620" y="54.6" width="13.4" height="3" fill="#6a6a6a"/>
<rect x="621.9" y="59.2" width="4" height="1.9" fill="none" stroke="#3b7bc4" stroke-width="0.9"/>
<rect x="627.5" y="59.2" width="4" height="1.9" fill="none" stroke="#3b7bc4" stroke-width="0.9"/>
<rect x="621.9" y="62.4" width="4" height="1.9" fill="none" stroke="#3b7bc4" stroke-width="0.9"/>
<rect x="627.5" y="62.4" width="4" height="1.9" fill="none" stroke="#3b7bc4" stroke-width="0.9"/>
<path d="M612.8,49.6 a6.4,6.4 0 0 1 12.6,0.6" fill="none" stroke="#3b7bc4" stroke-width="1.6"/>
<path d="M621.9,48.6 l3.5,4 l3.3,-4.2" fill="none" stroke="#3b7bc4" stroke-width="1.6"/>
<rect x="648.5" y="42.7" width="14" height="12.4" fill="#f4f4f4" stroke="#bcaec2" stroke-width="0.9"/>
<rect x="648.5" y="46.4" width="14" height="0.8" fill="#bcaec2"/>
<rect x="648.5" y="50.4" width="14" height="0.8" fill="#bcaec2"/>
<rect x="653" y="42.7" width="0.8" height="12.4" fill="#bcaec2"/>
<path d="M661.8,47 l-3.4,4.4 h2 l-1.6,4 l4.6,-5.4 h-2.2 l2,-3z" fill="#c4bcc4"/>
<rect x="648.4" y="65.4" width="4.6" height="13" fill="#fff" stroke="#6a6a6a" stroke-width="1"/>
<rect x="659.4" y="65.4" width="4.6" height="13" fill="#fff" stroke="#6a6a6a" stroke-width="1"/>
<rect x="648.9" y="65.9" width="3.6" height="3" fill="#3b7bc4"/><rect x="648.9" y="70.4" width="3.6" height="3" fill="#e8b568"/><rect x="648.9" y="74.9" width="3.6" height="3" fill="#e8b568"/>
<rect x="659.9" y="65.9" width="3.6" height="3" fill="#3b7bc4"/><rect x="659.9" y="70.4" width="3.6" height="3" fill="#e8b568"/>
<rect x="648.4" y="69.4" width="4.6" height="0.9" fill="#6a6a6a"/><rect x="648.4" y="73.9" width="4.6" height="0.9" fill="#6a6a6a"/>
<rect x="659.4" y="69.4" width="4.6" height="0.9" fill="#6a6a6a"/><rect x="659.4" y="73.9" width="4.6" height="0.9" fill="#6a6a6a"/>
<path d="M654,71.9h3.6 M656.3,70.2l1.8,1.7l-1.8,1.7" fill="none" stroke="#3b7bc4" stroke-width="1"/>
<rect x="648.5" y="91" width="9.6" height="3.6" fill="#fff" stroke="#7a7a7a" stroke-width="0.9"/>
<rect x="648.5" y="97.2" width="7" height="3.6" fill="#fff" stroke="#7a7a7a" stroke-width="0.9"/>
<path d="M656.4,90.6 l2.4,2.6 l4.8,-5.6" fill="none" stroke="#4f9a72" stroke-width="1.5"/>
<circle cx="660.3" cy="99" r="3.4" fill="#f1f1f1" stroke="#e8742c" stroke-width="1.2"/>
<path d="M658,96.7 l4.6,4.6" stroke="#e8742c" stroke-width="1.1"/>
<path d="M670.2,93.8h5l-2.5,3z" fill="#666"/>
<rect x="683.7" y="42.5" width="3.8" height="11.6" rx="0.8" fill="#fff" stroke="#565656" stroke-width="1.3"/>
<rect x="683.4" y="44.9" width="4.4" height="1" fill="#565656"/>
<rect x="683.4" y="47.8" width="4.4" height="1" fill="#565656"/>
<rect x="683.4" y="50.7" width="4.4" height="1" fill="#565656"/>
<rect x="683.6" y="68.6" width="6" height="5.8" fill="#fff" stroke="#5a5a5a" stroke-width="1"/>
<rect x="683.1" y="67.8" width="6" height="2.2" fill="#3b7bc4"/>
<rect x="685.2" y="71.8" width="2.6" height="0.9" fill="#5a5a5a"/>
<path d="M683.3,91.2 q0,-2 2.4,-2.8 l3.3,-1 v14.2 l-3.3,-0.8 q-2.4,-0.6 -2.4,-2.6 z" fill="#6db53c"/>
<path d="M685.6,92 l3.4,-1 v8.6 l-3.4,-0.8 z" fill="#dff0cf"/>
<path d="M687.2,91.6 v7.4" stroke="#6db53c" stroke-width="0.9"/>
<path d="M154.6,148.3h6.6l-3.3,3.6z" fill="#777"/>
<rect x="182.2" y="146.3" width="2" height="2" fill="#a6a6a6"/>
<rect x="182.2" y="150.1" width="2" height="2" fill="#a6a6a6"/>
<rect x="182.2" y="153.9" width="2" height="2" fill="#a6a6a6"/>
<path d="M212.6,147.2 l9,9 M221.6,147.2 l-9,9" stroke="#bdbdbd" stroke-width="1.6" fill="none"/>
<path d="M247.4,152.4 l3.8,3.6 l8.2,-9" stroke="#bdbdbd" stroke-width="1.8" fill="none"/>
<path d="M26,178.6 V190.2 H14.2 Z" fill="#b8b8b8"/>
<path d="M32.4,376.8 v6.4 l-4.2,-3.2z" fill="#c6c6c6"/>
<path d="M57.2,376.8 v6.4 l4.2,-3.2z" fill="#c6c6c6"/>
<circle cx="195.1" cy="380.1" r="7.5" fill="none" stroke="#6a6a6a" stroke-width="1.1"/>
<path d="M191.2,380.1h7.8 M195.1,376.2v7.8" stroke="#555" stroke-width="1.5"/>
<rect x="308.9" y="375.2" width="2" height="2" fill="#9c9c9c"/>
<rect x="308.9" y="379.2" width="2" height="2" fill="#9c9c9c"/>
<rect x="308.9" y="383.1" width="2" height="2" fill="#9c9c9c"/>
<path d="M335.1,377 v7 l-4.3,-3.5z" fill="#4a4a4a"/>
<rect x="200.8" y="400.8" width="10" height="10" fill="#fff" stroke="#6a6a6a" stroke-width="0.9"/>
<rect x="203.5" y="400.4" width="7.8" height="2.2" fill="#6a6a6a"/>
<rect x="204" y="403" width="0.8" height="7.6" fill="#8a8a8a"/>
<rect x="207.2" y="403" width="0.8" height="7.6" fill="#8a8a8a"/>
<rect x="201" y="405.2" width="9.8" height="0.8" fill="#8a8a8a"/>
<rect x="201" y="407.8" width="9.8" height="0.8" fill="#8a8a8a"/>
<circle cx="200.8" cy="400.6" r="2.6" fill="#6a6a6a"/>
</svg>
</body></html>
